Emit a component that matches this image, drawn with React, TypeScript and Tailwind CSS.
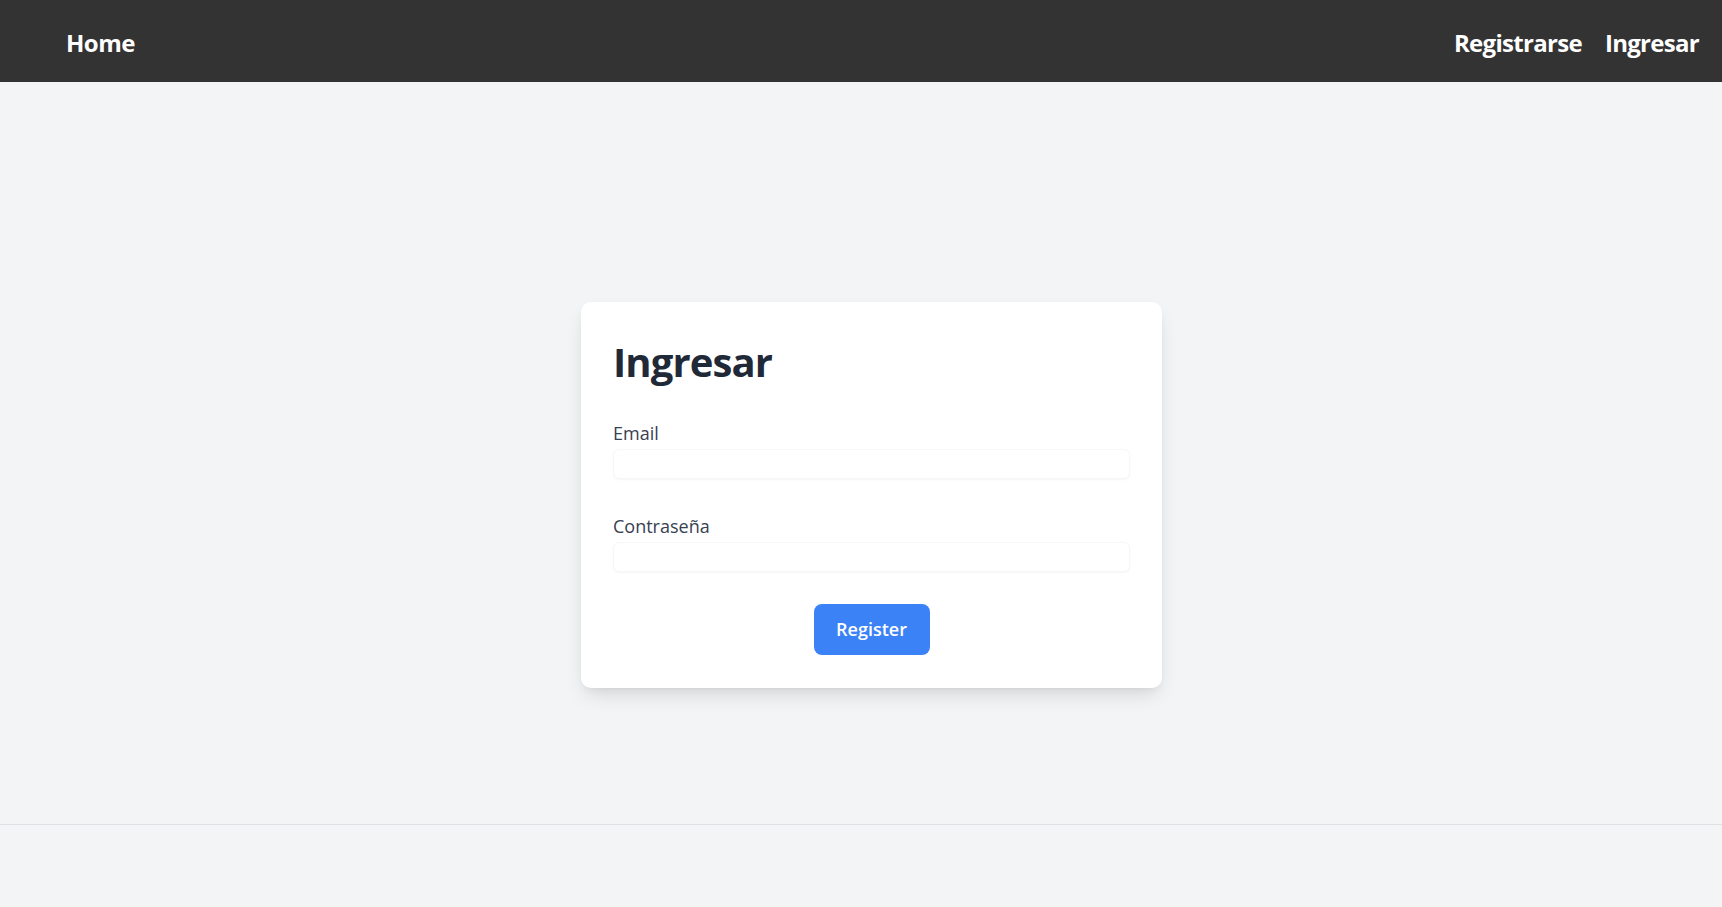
import React from "react";

export default function App() {
  return (
    <div className="min-h-screen bg-[#f3f4f6] font-['Open_Sans','Noto_Sans',sans-serif]">
      <nav className="h-[82px] bg-[#333333] flex items-center justify-between pl-[66px] pr-[23px] pt-[3px]">
        <a className="text-white text-[24px] leading-8 font-bold tracking-[-0.5px]">Home</a>
        <div className="flex items-center gap-[23px]">
          <a className="text-white text-[24px] leading-8 font-bold tracking-[-0.7px]">Registrarse</a>
          <a className="text-white text-[24px] leading-8 font-bold tracking-[-0.7px]">Ingresar</a>
        </div>
      </nav>
      <main className="h-[742px] flex justify-center items-start pt-[220px] pl-[21px]">
        <div className="w-[581px] bg-white rounded-[10px] shadow-[0_10px_20px_-4px_rgba(0,0,0,0.12),0_4px_8px_-4px_rgba(0,0,0,0.08)] px-8 pt-[33px] pb-[33px]">
          <h1 className="text-[40px] leading-[54px] font-bold tracking-[-0.9px] text-[#1f2937]">Ingresar</h1>
          <div className="mt-8 flex flex-col">
            <label className="text-[18px] leading-6 font-medium text-[#374151]">Email</label>
            <input
              type="email"
              className="mt-1 h-[30px] w-full rounded-md border border-[#f7f7f8] bg-white shadow-[0_1px_2px_rgba(0,0,0,0.04)] outline-none"
            />
          </div>
          <div className="mt-[35px] flex flex-col">
            <label className="text-[18px] leading-6 font-medium text-[#374151]">Contraseña</label>
            <input
              type="password"
              className="mt-1 h-[30px] w-full rounded-md border border-[#f7f7f8] bg-white shadow-[0_1px_2px_rgba(0,0,0,0.04)] outline-none"
            />
          </div>
          <div className="mt-8 flex justify-center">
            <button className="w-[116px] h-[51px] rounded-lg bg-[#3b82f6] text-white text-[18px] font-semibold">
              Register
            </button>
          </div>
        </div>
      </main>
      <footer className="h-[83px] border-t border-[#dfe0e3] bg-[#f3f4f6]"></footer>
    </div>
  );
}
